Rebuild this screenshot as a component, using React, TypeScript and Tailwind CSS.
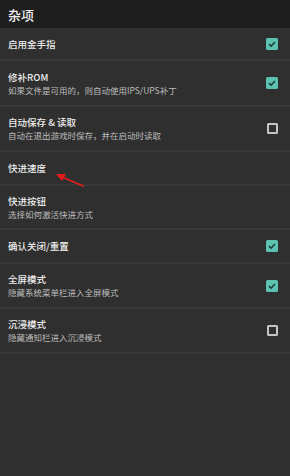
import React from "react";

type Row = { title: string; sub?: string; check?: boolean; h: string };

const rows: Row[] = [
  { title: "启用金手指", check: true, h: "h-[33px]" },
  { title: "修补ROM", sub: "如果文件是可用的，则自动使用IPS/UPS补丁", check: true, h: "h-[46px]" },
  { title: "自动保存 & 读取", sub: "自动在退出游戏时保存，并在启动时读取", check: false, h: "h-[45px]" },
  { title: "快进速度", h: "h-[34px]" },
  { title: "快进按钮", sub: "选择如何激活快进方式", h: "h-[44px]" },
  { title: "确认关闭/重置", check: true, h: "h-[34px]" },
  { title: "全屏模式", sub: "隐藏系统菜单栏进入全屏模式", check: true, h: "h-[45px]" },
  { title: "沉浸模式", sub: "隐藏通知栏进入沉浸模式", check: false, h: "h-[45px]" },
];

function Box({ on }: { on: boolean }) {
  if (on)
    return (
      <div className="w-[12px] h-[12px] rounded-[1.5px] bg-[#5cc2b2] flex items-center justify-center">
        <svg width="10" height="10" viewBox="0 0 10 10">
          <path d="M2 5.2 L4.1 7.2 L8 3" stroke="#1f3d38" strokeWidth="1.6" fill="none" />
        </svg>
      </div>
    );
  return <div className="w-[11px] h-[11px] rounded-[1.5px] border-2 border-[#c4c4c4]" />;
}

export default function App() {
  return (
    <div
      className="relative w-[290px] h-[476px] bg-[#2f2f2f] overflow-hidden"
      style={{ fontFamily: '"Noto Sans CJK SC", "Noto Sans", sans-serif' }}
    >
      <div className="h-[28px] bg-[#1e1e1e] flex items-center pl-[8px]">
        <span className="text-[13px] leading-none text-[#f0f0f0] font-medium">杂项</span>
      </div>
      {rows.map((r, i) => (
        <div
          key={i}
          className={`${r.h} flex items-center justify-between pl-[8px] pr-[12px] border-b-2 border-[#393939]`}
        >
          <div className="flex flex-col gap-[1px]">
            <span className="text-[9.5px] leading-[12px] text-[#ececec] font-medium">{r.title}</span>
            {r.sub && <span className="text-[8.5px] leading-[12px] text-[#bdbdbd]">{r.sub}</span>}
          </div>
          {r.check !== undefined && <Box on={r.check} />}
        </div>
      ))}
      <svg className="absolute left-0 top-0 pointer-events-none" width="290" height="476">
        <line x1="83" y1="186" x2="62" y2="177" stroke="#e21b1b" strokeWidth="1.8" strokeLinecap="round" />
        <polygon points="56,174 66,174 62,181" fill="#e21b1b" />
      </svg>
    </div>
  );
}
